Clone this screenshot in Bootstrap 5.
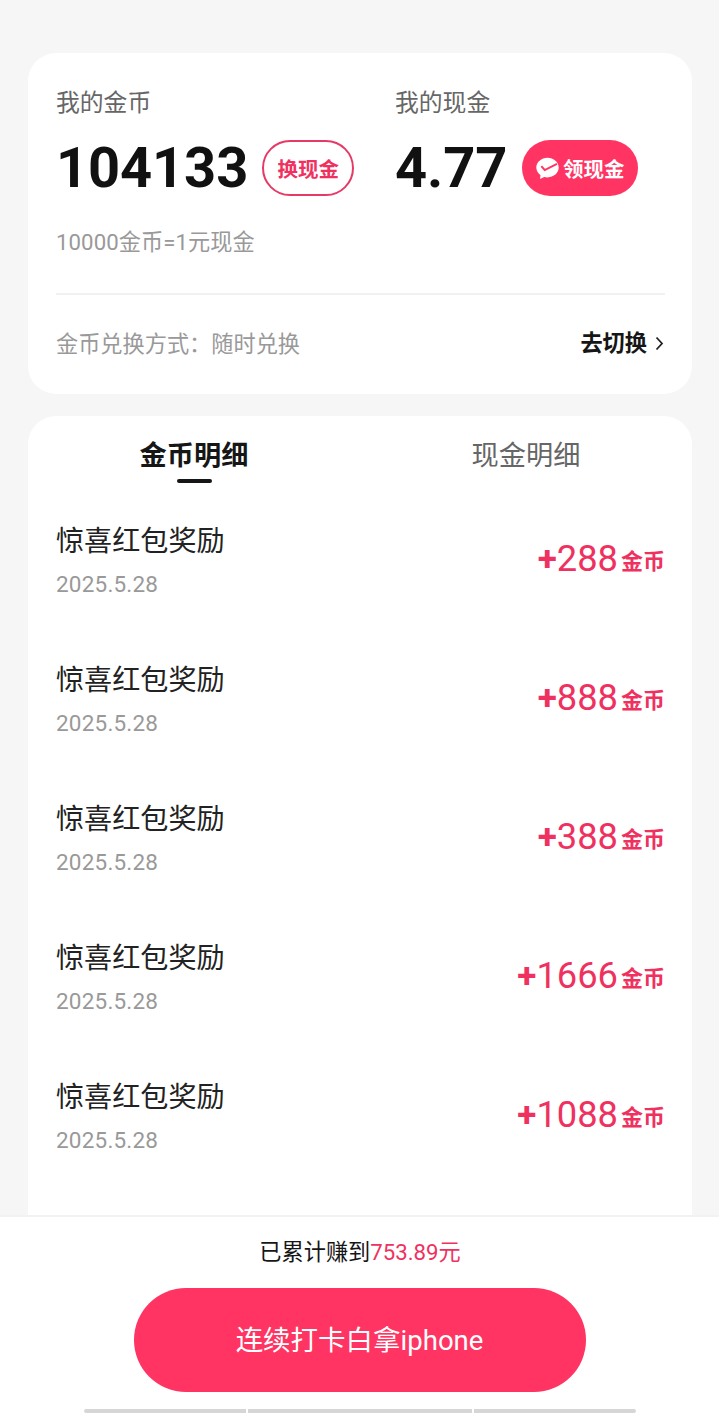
<!DOCTYPE html>
<html lang="zh-CN">
<head>
<meta charset="utf-8">
<meta name="viewport" content="width=device-width, initial-scale=1">
<title>我的金币</title>
<link href="https://cdn.jsdelivr.net/npm/bootstrap@5.3.0/dist/css/bootstrap.min.css" rel="stylesheet">
<style>
  :root { --pink: #ff3462; --pink-text: #ef315f; }
  body { font-family: Roboto, "Noto Sans CJK SC", sans-serif; background: #f6f6f6; color: #161616; height: 1413px; overflow: hidden; }
  .panel { border: 0; border-radius: 28px; margin: 0 27px 0 28px; padding: 0 27px 0 28px; background: #fff; }
  .balance { margin-top: 53px; height: 341px; }
  .ledger { margin-top: 22px; height: 800px; border-radius: 28px 28px 0 0; }
  .wallet-coin { width: 339px; }
  .caption { font-size: 23.8px; line-height: 36px; margin-top: 32px; color: #666; }
  .wallet-row { margin-top: 14px; }
  .amount { font-size: 56px; line-height: 66px; font-weight: 700; letter-spacing: -.1px; color: #111; }
  .pill { height: 56px; border-radius: 28px; font-size: 20.5px; line-height: 30px; font-weight: 700; padding: 0; }
  .pill-line { width: 92px; border: 2px solid #e63a66; color: var(--pink-text); margin-left: 14px; }
  .pill-fill { width: 116px; background: var(--pink); color: #fff; margin-left: 15px; border: 0; gap: 4px; }
  .pill span { padding-top: 3px; }
  .muted { font-size: 22.2px; line-height: 34px; color: #999; }
  .rate { margin-top: 24px; letter-spacing: .08px; }
  .rule { height: 2px; background: #f1f1f1; margin-top: 34px; }
  .mode-row { height: 97px; }
  .switch-link { font-size: 22.2px; font-weight: 700; color: #161616; text-decoration: none; }
  .tabs { height: 85px; margin: 0 -27px 0 -28px; }
  .tab-item { width: 332px; font-size: 27.2px; line-height: 40px; padding-top: 20px; color: #666; }
  .tab-item.on { color: #161616; font-weight: 700; }
  .tab-item.on::after { content: ""; display: block; width: 35px; height: 4px; border-radius: 2px; background: #161616; margin: 3px auto 0; }
  .entry { height: 139px; }
  .entry-name { font-size: 28.1px; line-height: 42px; margin-top: 20px; color: #222; }
  .entry-date { font-size: 22.5px; line-height: 34px; margin-top: 4px; color: #999; letter-spacing: .2px; }
  .gain { color: var(--pink-text); font-size: 36.3px; line-height: 44px; margin-top: 36px; }
  .gain b { font-size: 35px; }
  .gain .unit { font-size: 22px; font-weight: 700; margin-left: 3px; position: relative; top: -2px; }
  .dock { height: 198px; background: #fff; border-top: 2px solid #f2f2f2; }
  .total { font-size: 22.2px; line-height: 34px; padding-top: 18px; padding-left: 1px; }
  .total span { color: var(--pink-text); }
  .cta { width: 452px; height: 104px; border-radius: 52px; background: var(--pink); color: #fff; font-size: 27.5px; margin-top: 19px; border: 0; padding-top: 8px; }
  .handles { gap: 2px; margin-top: 17px; }
  .handles i { height: 4px; background: #d6d6d6; width: 162px; }
  .handles i:first-child { border-radius: 2px 0 0 2px; }
  .handles i:nth-child(2) { width: 224px; }
  .handles i:last-child { border-radius: 0 2px 2px 0; }
</style>
<script src="https://cdn.jsdelivr.net/npm/bootstrap@5.3.0/dist/js/bootstrap.bundle.min.js"></script>
</head>
<body class="d-flex flex-column">
  <section class="card panel balance">
    <div class="d-flex">
      <div class="wallet-coin">
        <div class="caption">我的金币</div>
        <div class="wallet-row d-flex align-items-center">
          <span class="amount">104133</span>
          <button class="btn pill pill-line d-flex align-items-center justify-content-center"><span>换现金</span></button>
        </div>
      </div>
      <div>
        <div class="caption">我的现金</div>
        <div class="wallet-row d-flex align-items-center">
          <span class="amount">4.77</span>
          <button class="btn pill pill-fill d-flex align-items-center justify-content-center">
            <svg width="23" height="23" viewBox="0 0 23 23" aria-hidden="true">
              <path fill="#fff" d="M11.500.8C5.300.8.300 5.200.300 10.600c0 3.100 1.700 5.800 4.200 7.600L4 22l4.200-2c1 .3 2.200.4 3.300.4 6.200 0 11.200-4.400 11.200-9.800S17.700.8 11.500.8z"/>
              <path fill="none" stroke="#ff3462" stroke-width="1.9" d="M5.300 9.200 8.700 13 21 6.800"/>
            </svg>
            <span>领现金</span>
          </button>
        </div>
      </div>
    </div>
    <div class="muted rate">10000金币=1元现金</div>
    <div class="rule"></div>
    <div class="mode-row d-flex align-items-center justify-content-between">
      <span class="muted">金币兑换方式：随时兑换</span>
      <a href="#" class="switch-link d-flex align-items-center">去切换
        <svg class="ms-2" width="10" height="16" viewBox="0 0 10 16" fill="none" stroke="#222" stroke-width="1.8" aria-hidden="true"><path d="M1.500 2.500 7 8.500 1.500 14.500"/></svg>
      </a>
    </div>
  </section>

  <section class="card panel ledger">
    <div class="tabs d-flex text-center">
      <div class="tab-item on">金币明细</div>
      <div class="tab-item">现金明细</div>
    </div>
    <div class="entry d-flex justify-content-between">
      <div><div class="entry-name">惊喜红包奖励</div><div class="entry-date">2025.5.28</div></div>
      <div class="gain"><b>+</b>288<span class="unit">金币</span></div>
    </div>
    <div class="entry d-flex justify-content-between">
      <div><div class="entry-name">惊喜红包奖励</div><div class="entry-date">2025.5.28</div></div>
      <div class="gain"><b>+</b>888<span class="unit">金币</span></div>
    </div>
    <div class="entry d-flex justify-content-between">
      <div><div class="entry-name">惊喜红包奖励</div><div class="entry-date">2025.5.28</div></div>
      <div class="gain"><b>+</b>388<span class="unit">金币</span></div>
    </div>
    <div class="entry d-flex justify-content-between">
      <div><div class="entry-name">惊喜红包奖励</div><div class="entry-date">2025.5.28</div></div>
      <div class="gain"><b>+</b>1666<span class="unit">金币</span></div>
    </div>
    <div class="entry d-flex justify-content-between">
      <div><div class="entry-name">惊喜红包奖励</div><div class="entry-date">2025.5.28</div></div>
      <div class="gain"><b>+</b>1088<span class="unit">金币</span></div>
    </div>
  </section>

  <footer class="dock d-flex flex-column align-items-center">
    <div class="total">已累计赚到<span>753.89元</span></div>
    <button class="btn cta">连续打卡白拿iphone</button>
    <div class="handles d-flex"><i></i><i></i><i></i></div>
  </footer>
</body>
</html>
